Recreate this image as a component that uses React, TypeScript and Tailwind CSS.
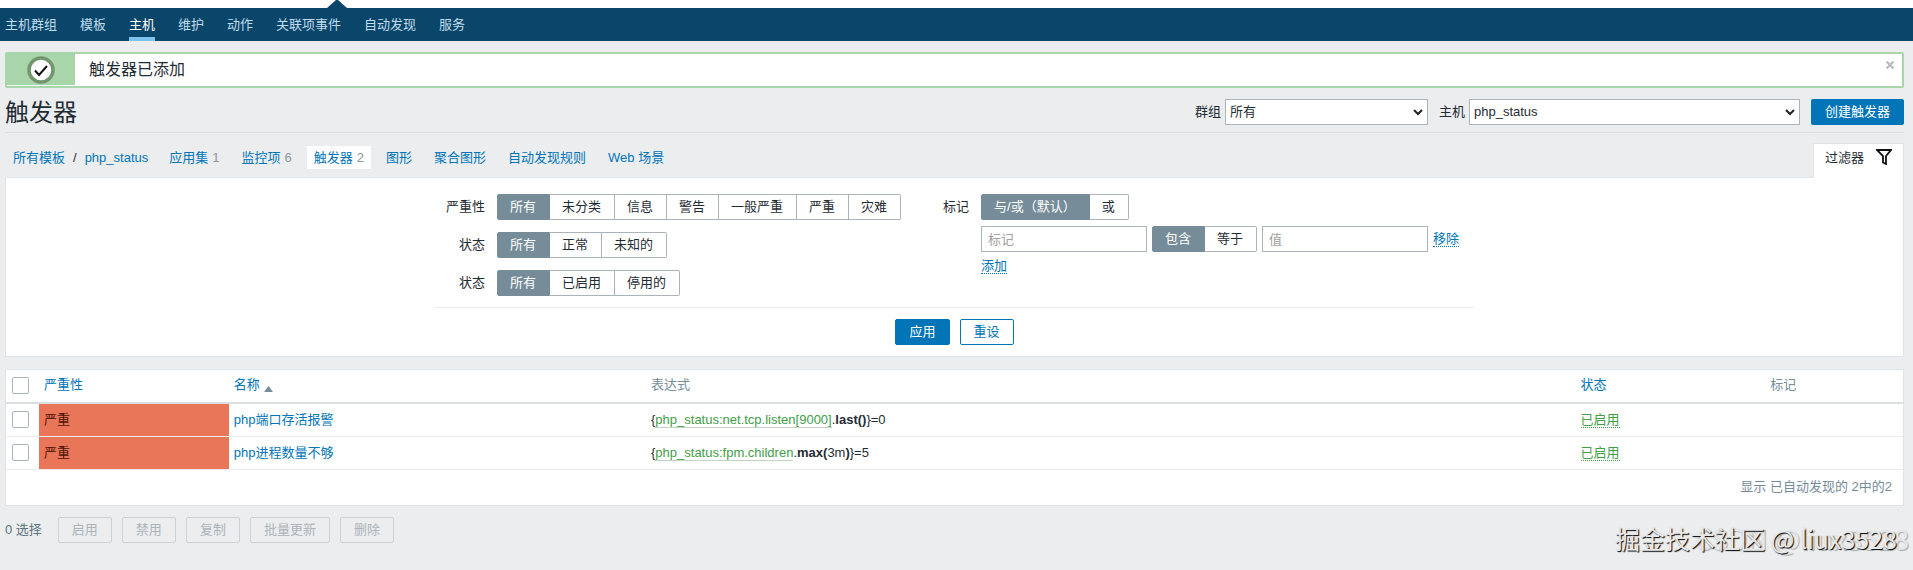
import React from 'react';
import clsx from 'clsx';

const navItems = ['主机群组', '模板', '主机', '维护', '动作', '关联项事件', '自动发现', '服务'];

const tabs = [
  { label: '应用集', count: 1 },
  { label: '监控项', count: 6 },
  { label: '触发器', count: 2 },
  { label: '图形' },
  { label: '聚合图形' },
  { label: '自动发现规则' },
  { label: 'Web 场景' },
];

const triggers = [
  { name: 'php端口存活报警', item: 'php_status:net.tcp.listen[9000]', func: 'last(', arg: '', value: '0' },
  { name: 'php进程数量不够', item: 'php_status:fpm.children', func: 'max(', arg: '3m', value: '5' },
];

const massActions = ['启用', '禁用', '复制', '批量更新', '删除'];

interface SegmentedProps {
  name: string;
  label: string;
  options: string[];
}

const Segmented: React.FC<SegmentedProps> = ({ name, label, options }) => (
  <div role="radiogroup" aria-label={label} className="flex">
    {options.map((option, i) => (
      <label
        key={option}
        className="flex h-[26px] cursor-pointer items-center border-y border-r border-[#acb4ba] bg-white pl-3 pr-[13px] whitespace-nowrap first:rounded-l-xs first:border-l last:rounded-r-xs has-checked:border-[#768d99] has-checked:bg-[#768d99] has-checked:text-white"
      >
        <input type="radio" name={name} defaultChecked={i === 0} className="sr-only" />
        {option}
      </label>
    ))}
  </div>
);

interface SelectProps {
  id: string;
  label: string;
  value: string;
  className: string;
}

const HeaderSelect: React.FC<SelectProps> = ({ id, label, value, className }) => (
  <div className="flex items-center gap-1">
    <label htmlFor={id}>{label}</label>
    <div className="relative">
      <select id={id} className={clsx('h-[26px] appearance-none border border-[#acb4ba] bg-white px-1', className)}>
        <option>{value}</option>
      </select>
      <svg viewBox="0 0 10 7" fill="none" stroke="#222" strokeWidth={2} className="pointer-events-none absolute top-[10px] right-[5px] h-[7px] w-[10px]">
        <path d="M1 1l4 4 4-4" />
      </svg>
    </div>
  </div>
);

const Checkbox: React.FC<{ label: string }> = ({ label }) => (
  <input
    type="checkbox"
    aria-label={label}
    className="block size-[17px] appearance-none rounded-xs border border-[#acb4ba] bg-white checked:bg-[#0275b8]"
  />
);

const linkStyle = 'text-[#0275b8]';
const dottedStyle = 'border-b border-dotted leading-[15px]';
const inputStyle = 'h-[26px] w-[166px] border border-[#acb4ba] bg-white px-1.5 placeholder:text-[#a0a0a0]';

const App: React.FC = () => {
  return (
    <div className="relative min-h-screen bg-[#ebedef] font-['Liberation_Sans','Noto_Sans_CJK_SC',sans-serif] text-[13px] leading-[18px] text-[#1f2c33]">
      <div className="h-2 bg-white">
        <svg viewBox="0 0 20 8" className="ml-[327px] h-2 w-5">
          <path d="M9 0h2l9 8H0z" fill="#0a466a" />
        </svg>
      </div>
      <nav className="bg-[#0a466a] px-[5px]">
        <ul className="flex gap-[23px]">
          {navItems.map((item) => (
            <li key={item}>
              <a
                href="#"
                className={clsx(
                  'flex h-[33px] items-center border-b-4 pt-1',
                  item === '主机' ? 'border-[#7ec2ee] text-white' : 'border-transparent text-[#c0dcee]'
                )}
              >
                {item}
              </a>
            </li>
          ))}
        </ul>
      </nav>

      <main className="pt-[11px] pr-[9px] pl-[5px]">
        <output className="flex h-9 rounded-xs border-2 border-[#a8d6aa] bg-white">
          <span className="mb-px flex w-[68px] items-center justify-center bg-[#a8d6aa]">
            <svg viewBox="0 0 28 28" fill="none" className="size-7">
              <circle cx="14" cy="14" r="12" fill="#fff" stroke="#71966f" strokeWidth={3.5} />
              <path d="M8 14.5l4 4.5 8-9" stroke="#111" strokeWidth={2} />
            </svg>
          </span>
          <span className="flex-1 self-center pl-3.5 text-base">触发器已添加</span>
          <button type="button" aria-label="关闭" className="mt-[7px] mr-2 size-2">
            <svg viewBox="0 0 8 8" stroke="#b4bcc1" strokeWidth={2.2} className="size-2">
              <path d="M.5.5l7 7M7.5.5l-7 7" />
            </svg>
          </button>
        </output>

        <header className="flex h-[45px] items-center justify-between border-b border-[#dcdfe2] pt-1">
          <h1 className="pt-0.5 text-2xl">触发器</h1>
          <form className="flex items-center gap-[11px]">
            <HeaderSelect id="group" label="群组" value="所有" className="w-[203px]" />
            <HeaderSelect id="host" label="主机" value="php_status" className="w-[331px]" />
            <button type="button" className="h-[26px] rounded-xs bg-[#0275b8] px-3.5 text-white">
              创建触发器
            </button>
          </form>
        </header>

        <div className="flex items-end justify-between pt-2.5">
          <ul className="flex items-center gap-2 self-start pt-[3px] pl-2">
            <li className="flex pr-1.5">
              <a href="#" className={linkStyle}>所有模板</a>
              <span className="px-2">/</span>
              <a href="#" className={linkStyle}>php_status</a>
            </li>
            {tabs.map((tab) => (
              <li
                key={tab.label}
                className={clsx('flex h-[23px] items-center px-[7px]', tab.label === '触发器' && 'bg-white')}
              >
                <a href="#" className={linkStyle}>{tab.label}</a>
                {tab.count && <span className="pl-1 text-[#8b959b]">{tab.count}</span>}
              </li>
            ))}
          </ul>
          <a href="#" className="z-10 -mb-px flex h-[35px] gap-3 border-x border-t border-[#dfe4e7] bg-white px-[11px] pt-[5px]">
            <span>过滤器</span>
            <svg viewBox="0 0 16 16" fill="none" stroke="#111" strokeWidth={1.8} className="size-4">
              <path d="M1 1h14l-5 6v8l-3-1.5V7z" />
            </svg>
          </a>
        </div>

        <form className="border border-[#dfe4e7] bg-white pt-4 pb-[11px]">
          <div className="mx-auto w-fit">
            <div className="flex gap-[42px] border-b border-[#ebedef] pr-4 pb-[11px]">
              <div className="grid grid-cols-[51px_auto] items-center justify-start gap-3">
                <span className="text-right">严重性</span>
                <Segmented name="severity" label="严重性" options={['所有', '未分类', '信息', '警告', '一般严重', '严重', '灾难']} />
                <span className="text-right">状态</span>
                <Segmented name="state" label="状态" options={['所有', '正常', '未知的']} />
                <span className="text-right">状态</span>
                <Segmented name="status" label="状态" options={['所有', '已启用', '停用的']} />
              </div>
              <div className="flex gap-3">
                <span className="pt-1">标记</span>
                <div className="flex flex-col items-start gap-1.5">
                  <Segmented name="evaltype" label="标记" options={['与/或（默认）', '或']} />
                  <div className="flex items-center gap-[5px]">
                    <input type="text" aria-label="标记" placeholder="标记" className={inputStyle} />
                    <Segmented name="operator" label="运算符" options={['包含', '等于']} />
                    <input type="text" aria-label="值" placeholder="值" className={inputStyle} />
                    <button type="button" className={clsx(linkStyle, dottedStyle)}>移除</button>
                  </div>
                  <button type="button" className={clsx(linkStyle, dottedStyle)}>添加</button>
                </div>
              </div>
            </div>
          </div>
          <div className="flex justify-center gap-2.5 pt-[11px]">
            <button type="button" className="h-[26px] rounded-xs border border-[#0275b8] bg-[#0275b8] px-[13px] text-white">应用</button>
            <button type="button" className="h-[26px] rounded-xs border border-[#0275b8] bg-white px-[13px] text-[#0275b8]">重设</button>
          </div>
        </form>

        <div className="mt-3 border border-[#dfe4e7] bg-white">
          <table className="w-full table-fixed text-left">
            <thead>
              <tr className="h-[33px] border-b-2 border-[#dcdfe2] text-[#768d99] *:px-[5px] *:pb-0.5 *:font-normal *:first:pl-1.5">
                <th className="w-[33px]"><Checkbox label="全选" /></th>
                <th className="w-[10%]"><a href="#" className={linkStyle}>严重性</a></th>
                <th className="w-[22%]">
                  <a href="#" className={linkStyle}>名称</a>
                  <svg viewBox="0 0 9 6" className="ml-1 inline-block h-1.5 w-[9px] align-text-bottom">
                    <path d="M4.5 0L9 6H0z" fill="#768d99" />
                  </svg>
                </th>
                <th className="w-[49%]">表达式</th>
                <th className="w-[10%]"><a href="#" className={linkStyle}>状态</a></th>
                <th>标记</th>
              </tr>
            </thead>
            <tbody>
              {triggers.map((trigger) => (
                <tr key={trigger.name} className="h-[33px] border-b border-[#ebedef] *:px-[5px] *:first:pl-1.5">
                  <td><Checkbox label={trigger.name} /></td>
                  <td className="bg-[#e97659] text-[#4e1408]">严重</td>
                  <td><a href="#" className={linkStyle}>{trigger.name}</a></td>
                  <td>
                    {'{'}
                    <a href="#" className="border-b border-[#c3d3c6] text-[#429e47]">{trigger.item}</a>
                    .<b>{trigger.func}</b>{trigger.arg}<b>)</b>{'}='}{trigger.value}
                  </td>
                  <td><a href="#" className={clsx(dottedStyle, 'text-[#429e47]')}>已启用</a></td>
                  <td />
                </tr>
              ))}
            </tbody>
          </table>
          <div className="flex h-[35px] items-center justify-end pr-[11px] text-[#768d99]">显示 已自动发现的 2中的2</div>
        </div>

        <div className="flex items-center gap-2.5 pt-[11px]">
          <span className="pr-1.5 text-[#5f7380]">0 选择</span>
          {massActions.map((action) => (
            <button key={action} type="button" disabled className="h-[26px] rounded-xs border border-[#ccd1d4] px-[13px] text-[#acb4ba]">
              {action}
            </button>
          ))}
        </div>
      </main>

      <div className="pointer-events-none absolute right-1 bottom-4 font-['Noto_Sans_CJK_SC',sans-serif] text-[28px] leading-8 text-[#e4e6e8] [text-shadow:1px_1px_1px_#a8abae]">
        CSDN @liux3528
      </div>
      <div className="pointer-events-none absolute right-4 bottom-4 font-['Noto_Sans_CJK_SC',sans-serif] text-[25px] leading-8 text-[#e6e8ea] [text-shadow:1px_1px_1px_#000]">
        掘金技术社区 @ liux3528
      </div>
    </div>
  );
};

export default App;
